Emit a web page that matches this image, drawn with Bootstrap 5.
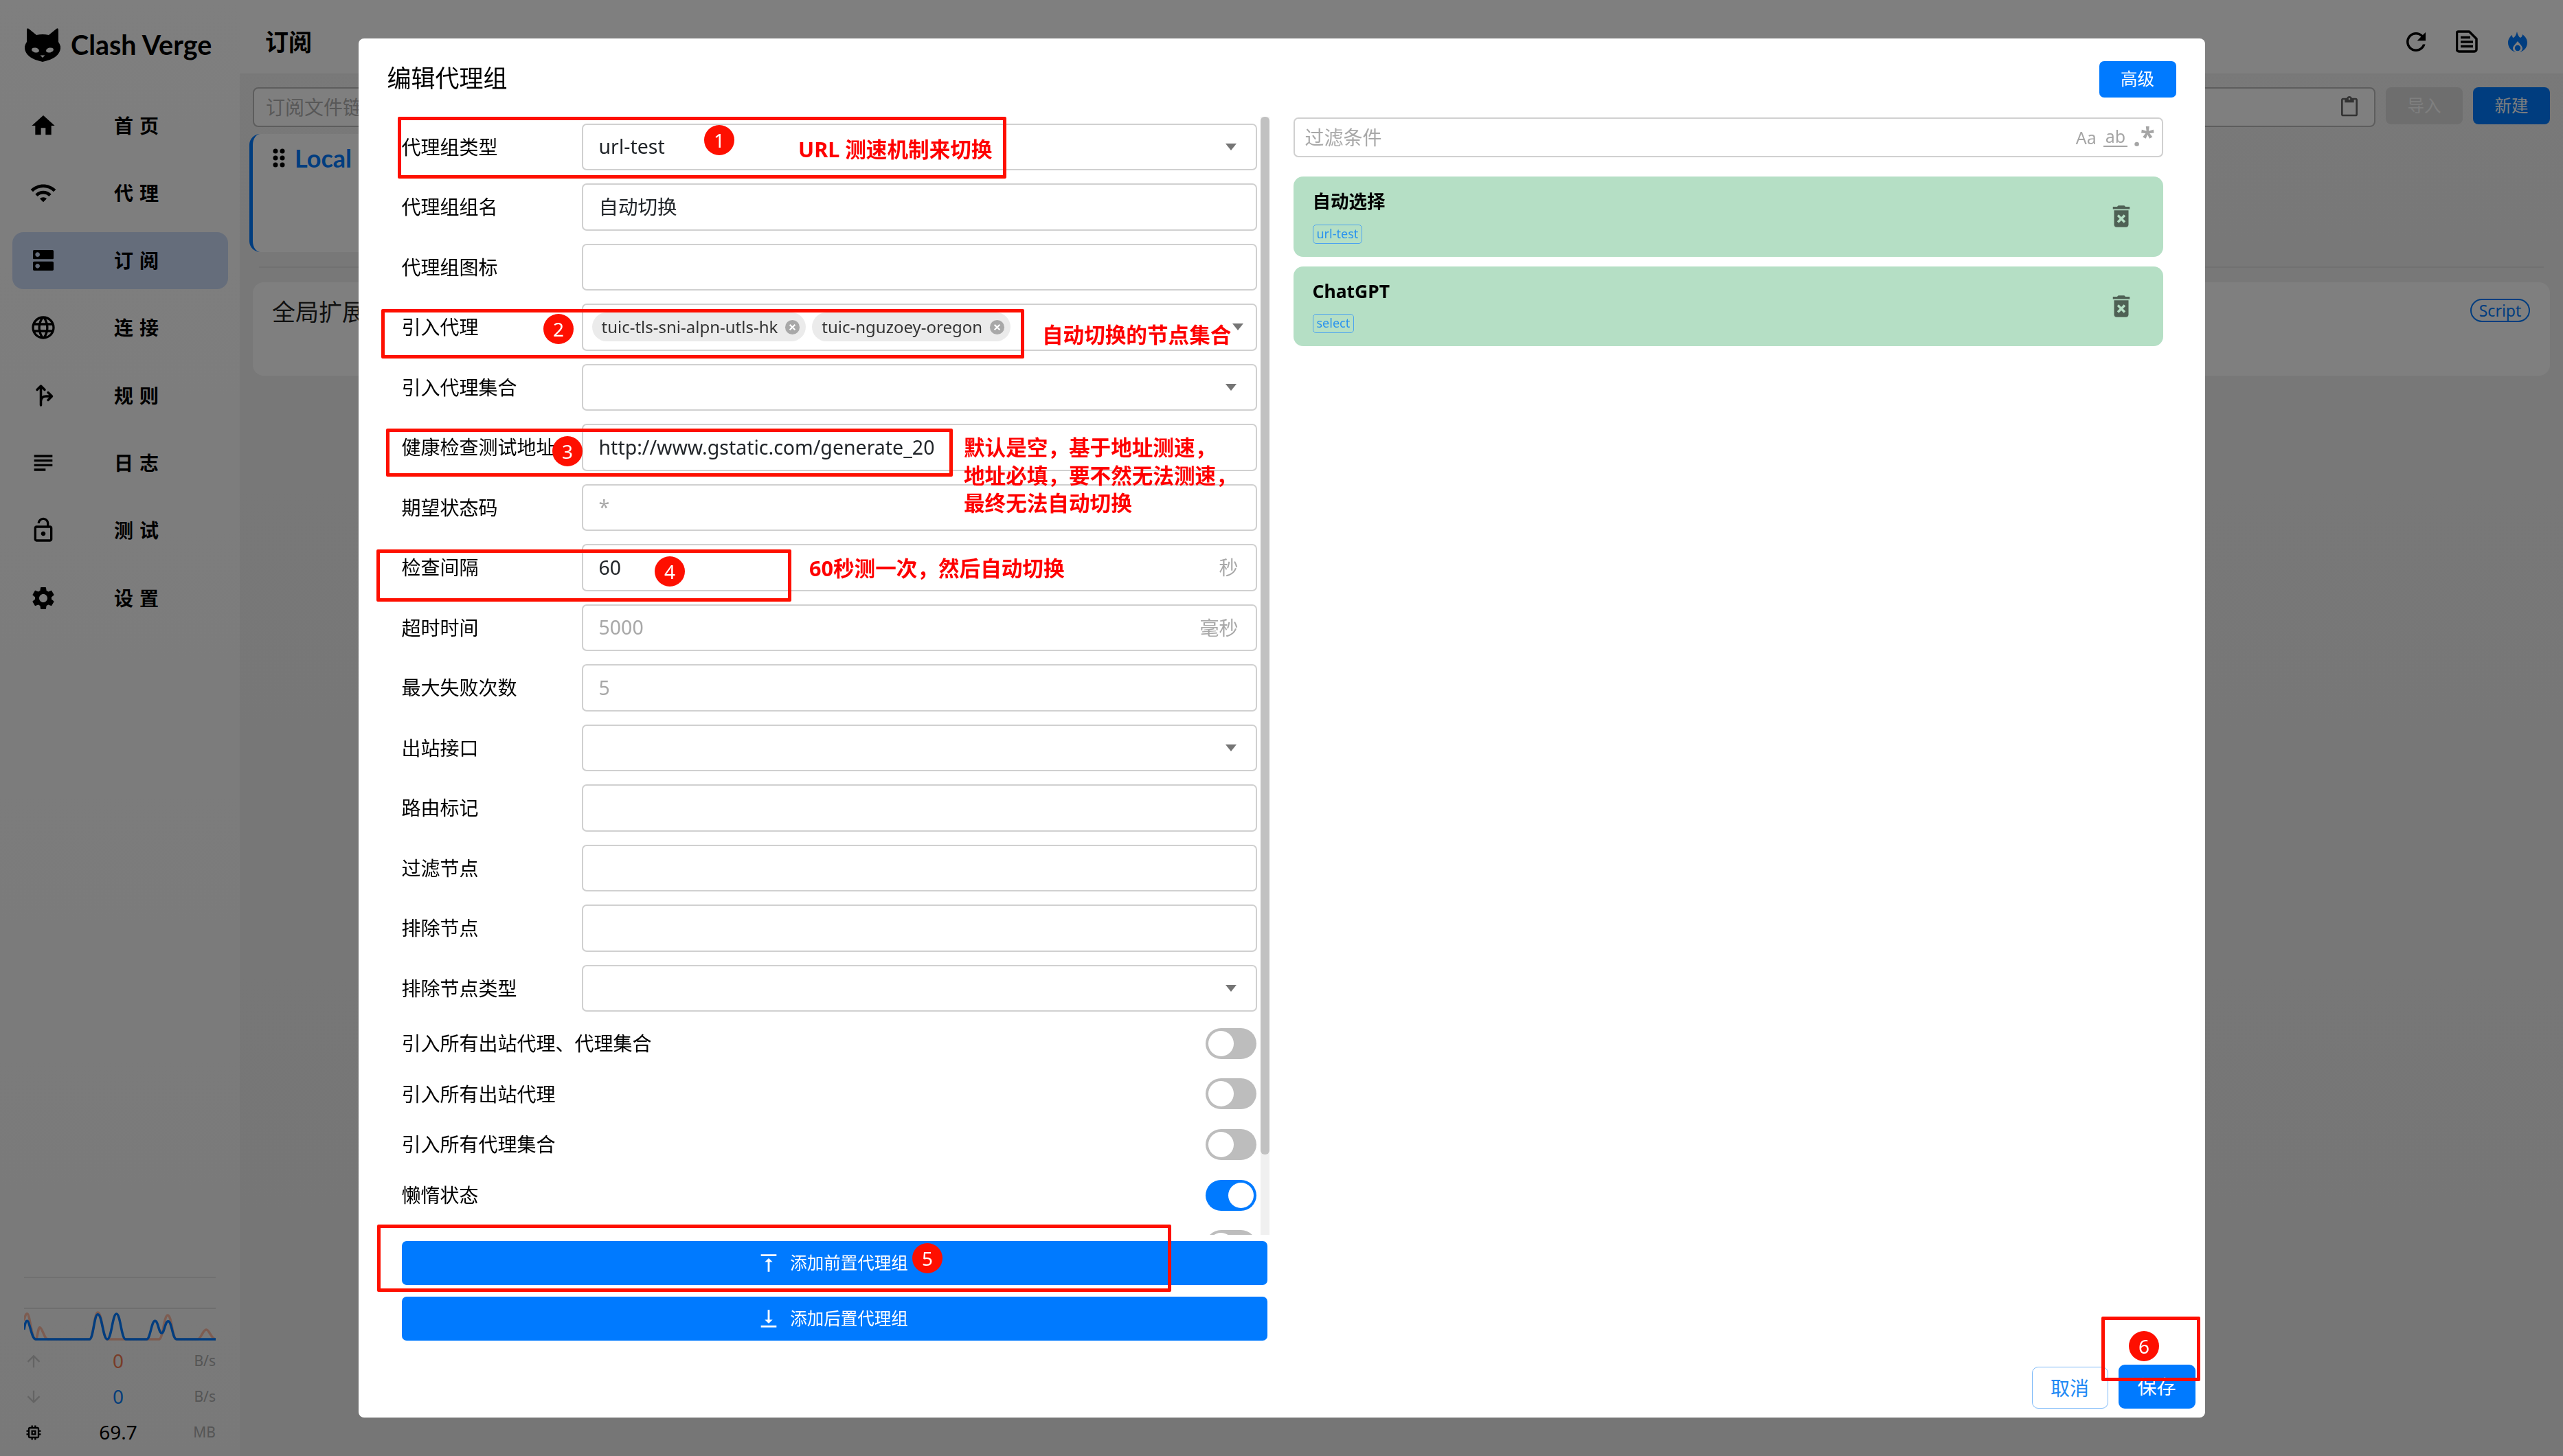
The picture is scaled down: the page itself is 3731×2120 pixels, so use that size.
<!DOCTYPE html>
<html lang="zh-CN">
<head>
<meta charset="utf-8">
<title>Clash Verge</title>
<link rel="stylesheet" href="https://cdn.jsdelivr.net/npm/bootstrap@5.3.0/dist/css/bootstrap.min.css">
<style>
html,body{height:100%;overflow:hidden}
body{font-family:"Noto Sans","Noto Sans CJK SC",sans-serif;font-size:28px;color:#000;background:#f0f0f0}
svg{display:block;flex:none}
.app-shell{height:2120px;width:3731px}
.side-pane{width:349px;background:linear-gradient(#fefefe,#f3f3f3);flex:none}
.logo-area{height:141px;padding:41px 0 0 36px}
.logo-txt{font-family:Lato,sans-serif;font-weight:700;font-size:39.500px;margin-left:15px;line-height:48px}
.nav-rows{padding:0 17px 0 18px;display:flex;flex-direction:column;gap:15.3px}
.nav-row{height:83px;border-radius:16px;padding-left:25px;display:flex;align-items:center;font-weight:700;letter-spacing:9px}
.nav-row svg{width:40px;height:40px;margin-right:83px}
.nav-row.is-on{background:#cadaf6}
.rule-ico path{fill:none;stroke:#000;stroke-width:3.500;stroke-linecap:round;stroke-linejoin:round}
.traffic{margin-top:auto;padding:0 35px 8px}
.tr-line{height:45px;border-top:2px solid #e0e0e0}
.tr-line2{height:0;border-top:2px solid #dcdcdc}
.tr-chart{width:279px;height:50px}
.tr-chart path{fill:none;stroke-width:3.5px;vector-effect:non-scaling-stroke}
.tr-row{height:52px;display:grid;grid-template-columns:28px 218px 33px;align-items:center}
.tr-row svg{width:28px;height:28px}
.tr-val{text-align:center;font-size:28px;line-height:1;margin-top:-3px}
.tr-up{color:#f0784f}
.tr-down{color:#0a7cf5}
.tr-unit{font-size:21px;color:#aaa;text-align:right;white-space:nowrap;justify-self:end}
.main-pane{background:linear-gradient(#f2f2f2,#ececec);min-width:0}
.top-bar{height:109px;background:#fefefe;padding:14px 29px 0 37px;border-bottom:2px solid #f0f0f0}
.page-ttl{font-size:34px;font-weight:700;line-height:1}
.top-ico{width:74px;display:flex;justify-content:center}
.tool-row{margin:18px 19px 0;gap:15px}
.url-box{height:58px;border:2px solid #bbb;border-radius:8px;background:#fff;padding:0 20px 0 17px;color:#b0b0b0}
.tool-btn{width:112px;height:54px;border-radius:8px;border:0;font-size:24.5px;color:#fff;flex:none;padding:0}
.tool-off{background:#dcdcdc;color:#fff}
.tool-new{background:#007aff}
.local-card{width:800px;height:172px;margin:10px 0 0 14px;background:#fff;border-left:5px solid #007aff;border-radius:16px;padding:8px 0 0 29px}
.local-name{font-weight:700;font-size:36px;color:#007aff;font-family:Lato,sans-serif;margin-left:14px}
.sep-line{margin:21px 28px 0 28px;border-top:2px solid #e2e2e2}
.ext-card{height:136px;margin:21px 19px 0;background:#fff;border-radius:16px;padding:20px 29px 0 28px}
.ext-ttl{font-size:34px;line-height:46px;color:#222}
.tag-pill{border:2px solid #007aff;color:#007aff;border-radius:17px;font-size:23px;height:34px;width:87px;display:flex;align-items:center;justify-content:center;margin-top:4px}
.dlg{max-width:2688px;margin:56px auto 0}
.dlg .modal-content{height:2008px;border:0;border-radius:8px}
.dlg-head{height:114px;padding:0 42px;flex:none}
.dlg-ttl{font-size:35px;line-height:1}
.blue-btn{background:#007aff;color:#fff;border:0;border-radius:7px;font-size:24.5px;padding:0}
.adv-btn{width:112px;height:53px;margin-top:4px}
.dlg-body{flex:1;min-height:0;padding:0 61px 0 63px;gap:35px}
.left-col{width:1263px;flex:none}
.form-wrap{height:1628px;position:relative}
.form-scroll{height:100%;overflow:hidden;padding-right:18px}
.sb-track{position:absolute;right:0;top:0;bottom:0;width:13px;background:#f0f0f0}
.sb-thumb{position:absolute;right:0;top:0;width:13px;height:1511px;background:#c1c1c1;border-radius:6px}
.frow{height:87.5px;display:flex;align-items:center}
.flabel{width:262px;flex:none;line-height:1;white-space:nowrap}
.fbox{flex:1;height:68.5px;border:2px solid #d0d0d0;border-radius:7px;padding:0 23px;display:flex;align-items:center;font-size:28.500px;position:relative;min-width:0}
.fbox.with-chips{padding:0 13px}
.ph{color:#a8a8a8}
.unit{margin-left:auto;color:#a8a8a8;padding-right:2px;font-size:28px}
.caret-tri{width:0;height:0;border:8px solid transparent;border-top:10px solid #757575;border-bottom:0;margin-left:auto;margin-right:5px}
.chip-pill{height:42px;border-radius:21px;background:#ebebeb;padding:0 8px 0 14px;display:flex;align-items:center;font-size:24px;color:#333;margin-right:9px;white-space:nowrap}
.chip-x{width:23px;height:23px;margin-left:10px}
.trow{height:73.6px;display:flex;align-items:center;justify-content:space-between;padding-right:1px}
.tgl{width:74px;height:45px;border-radius:23px;background:#bdbdbd;padding:4px;display:flex}
.tgl::after{content:"";width:37px;height:37px;border-radius:50%;background:#fff}
.tgl.is-on{background:#007aff;justify-content:flex-end}
.wide-btn{height:64px;width:1260px;display:flex;align-items:center;justify-content:center;font-size:24.5px;margin-top:17px;padding-right:5px}
.wide-btn svg{width:34px;height:34px;margin-right:14px}
.wide-first{margin-top:9px}
.right-col{flex:1;min-width:0;padding-top:1px}
.filter-box{height:58px;border:2px solid #d0d0d0;border-radius:7px;padding:0 10px 0 15px;font-size:28px;color:#a8a8a8}
.filt-sym{font-size:25px;color:#a5a5a5;margin-left:10px;line-height:1}
.ab-sym{border-bottom:2px solid #a5a5a5;padding:0 3px 1px}
.star-sym{font-size:38px;font-weight:700;margin-left:8px;margin-bottom:4px}
.grp-card{height:116.5px;background:#b5dfc5;border-radius:14px;padding:0 14px 0 28px;margin-top:14px}
.grp-first{margin-top:28px}
.grp-ttl{font-size:26.500px;font-weight:700;line-height:1;margin-top:6px}
.grp-tag{border:1.5px solid #4ba3f0;color:#2b93ee;border-radius:5px;font-size:18px;line-height:25px;height:28px;padding:0 5px;display:inline-block;margin-top:20px}
.grp-del{width:42px;height:42px;margin-right:26px;fill:#4f6155}
.dlg-foot{height:76px;padding:0 14px 13px 0;gap:15px;flex:none}
.ghost-btn{width:111px;height:61px;background:#fff;border:1.5px solid #7db9f8;border-radius:9px;color:#2089f5;font-size:28px;padding:0}
.save-btn{width:112px;height:64px;border-radius:9px;font-size:28px}
.ann-layer{position:fixed;inset:0;z-index:1060;pointer-events:none}
.red-box{position:absolute;border:5px solid #fe0f00;border-radius:2px}
.rb1{left:579px;top:170px;width:886px;height:90px}
.rb2{left:555px;top:450px;width:936px;height:72px}
.rb3{left:562px;top:624px;width:825px;height:70px}
.rb4{left:548px;top:800px;width:604px;height:76px}
.rb5{left:549px;top:1783px;width:1156px;height:98px}
.rb6{left:3059px;top:1917px;width:144px;height:94px}
.red-dot{position:absolute;width:44px;height:44px;border-radius:50%;background:#fe0f00;color:#fff;font-size:28px;line-height:44px;text-align:center}
.rd1{left:1025px;top:182px}
.rd2{left:791px;top:457px}
.rd3{left:804px;top:635px}
.rd4{left:953px;top:810px}
.rd5{left:1328px;top:1810px}
.rd6{left:3099px;top:1938px}
.red-txt{position:absolute;color:#fe0000;font-weight:700;font-size:30.600px;line-height:40px;white-space:nowrap}
.rt1{left:1162px;top:197px}
.rt2{left:1517px;top:467px}
.rt3{left:1403px;top:631px;line-height:40.5px}
.rt4{left:1178px;top:807px}
</style>
</head>
<body>
<div class="app-shell d-flex">
  <aside class="side-pane d-flex flex-column">
    <div class="logo-area d-flex align-items-start">
      <svg width="52" height="50" viewBox="0 0 52 50"><path d="M6 1L17 10Q26 8 35 10L46 1Q49-1 49 3L49 20Q53 26 52 30Q50 44 26 49Q2 44 0 30Q-1 26 3 20L3 3Q3-1 6 1Z"/><ellipse cx="15.500" cy="32" rx="5.500" ry="3.500" fill="#fff" transform="rotate(12 15.500 32)"/><ellipse cx="36.500" cy="32" rx="5.500" ry="3.500" fill="#fff" transform="rotate(-12 36.500 32)"/><path d="M22.500 39.500h7L26 43z" fill="#fff"/></svg>
      <span class="logo-txt">Clash Verge</span>
    </div>
    <nav class="nav-rows">
      <div class="nav-row"><svg viewBox="0 0 24 24"><path d="M10 20v-6h4v6h5v-8h3L12 3 2 12h3v8z"/></svg>首页</div>
      <div class="nav-row"><svg viewBox="0 0 24 24"><path d="M1 9l2 2c4.970-4.970 13.030-4.970 18 0l2-2C16.930 2.930 7.080 2.930 1 9zm8 8l3 3 3-3c-1.650-1.660-4.340-1.660-6 0zm-4-4l2 2c2.760-2.760 7.240-2.760 10 0l2-2C15.140 9.140 8.870 9.140 5 13z"/></svg>代理</div>
      <div class="nav-row is-on"><svg viewBox="0 0 24 24"><path d="M20 13H4c-.55 0-1 .45-1 1v6c0 .55.45 1 1 1h16c.55 0 1-.45 1-1v-6c0-.55-.45-1-1-1zM7 19c-1.100 0-2-.9-2-2s.9-2 2-2 2 .9 2 2-.9 2-2 2zM20 3H4c-.55 0-1 .45-1 1v6c0 .55.45 1 1 1h16c.55 0 1-.45 1-1V4c0-.55-.45-1-1-1zM7 9c-1.100 0-2-.9-2-2s.9-2 2-2 2 .9 2 2-.9 2-2 2z"/></svg>订阅</div>
      <div class="nav-row"><svg viewBox="0 0 24 24"><path d="M11.990 2C6.470 2 2 6.480 2 12s4.470 10 9.990 10C17.520 22 22 17.520 22 12S17.520 2 11.990 2zm6.930 6h-2.950c-.32-1.250-.78-2.450-1.380-3.560 1.840.63 3.370 1.910 4.330 3.560zM12 4.040c.83 1.200 1.480 2.530 1.910 3.960h-3.820c.43-1.430 1.080-2.760 1.910-3.960zM4.260 14C4.100 13.360 4 12.690 4 12s.1-1.360.26-2h3.380c-.08.66-.14 1.320-.14 2 0 .68.06 1.340.14 2H4.260zm.82 2h2.950c.32 1.250.78 2.450 1.380 3.560-1.840-.63-3.370-1.900-4.330-3.560zm2.950-8H5.080c.96-1.660 2.490-2.930 4.330-3.560C8.810 5.550 8.350 6.750 8.030 8zM12 19.960c-.83-1.200-1.480-2.530-1.910-3.960h3.820c-.43 1.430-1.080 2.760-1.910 3.960zM14.340 14H9.660c-.09-.66-.16-1.320-.16-2 0-.68.07-1.350.16-2h4.680c.09.65.16 1.320.16 2 0 .68-.07 1.340-.16 2zm.25 5.560c.6-1.110 1.060-2.310 1.380-3.560h2.950c-.96 1.650-2.490 2.930-4.330 3.560zM16.360 14c.08-.66.14-1.320.14-2 0-.68-.06-1.340-.14-2h3.380c.16.64.26 1.310.26 2s-.1 1.360-.26 2h-3.380z"/></svg>连接</div>
      <div class="nav-row"><svg class="rule-ico" viewBox="3 6 40 40"><path d="M14 17.500L19.500 12L25 17.500M19.500 12V40M19.500 34C20 29 23 27 27 27H35M30 21.500L35.500 27L30 32.500"/></svg>规则</div>
      <div class="nav-row"><svg viewBox="0 0 24 24"><path d="M14 17H4v2h10v-2zm6-8H4v2h16V9zM4 15h16v-2H4v2zM4 5v2h16V5H4z"/></svg>日志</div>
      <div class="nav-row"><svg viewBox="0 0 24 24"><path d="M18 8h-1V6c0-2.760-2.240-5-5-5S7 3.240 7 6h2c0-1.660 1.340-3 3-3s3 1.340 3 3v2H6c-1.100 0-2 .9-2 2v10c0 1.100.9 2 2 2h12c1.100 0 2-.9 2-2V10c0-1.100-.9-2-2-2zm0 12H6V10h12v10zm-6-3c1.100 0 2-.9 2-2s-.9-2-2-2-2 .9-2 2 .9 2 2 2z"/></svg>测试</div>
      <div class="nav-row"><svg viewBox="0 0 24 24"><path d="M19.140 12.940c.04-.3.06-.61.06-.94 0-.32-.02-.64-.07-.94l2.030-1.580c.18-.14.23-.41.12-.61l-1.920-3.320c-.12-.22-.37-.29-.59-.22l-2.390.96c-.5-.38-1.030-.7-1.620-.94l-.36-2.540c-.04-.24-.24-.41-.48-.41h-3.840c-.24 0-.43.17-.47.41l-.36 2.540c-.59.24-1.130.57-1.620.94l-2.390-.96c-.22-.08-.47 0-.59.22L2.740 8.870c-.12.21-.08.47.12.61l2.030 1.580c-.05.3-.09.63-.09.94s.02.64.07.94l-2.030 1.580c-.18.14-.23.41-.12.61l1.920 3.320c.12.22.37.29.59.22l2.390-.96c.5.38 1.030.7 1.620.94l.36 2.540c.05.24.24.41.48.41h3.840c.24 0 .44-.17.47-.41l.36-2.540c.59-.24 1.130-.56 1.620-.94l2.390.96c.22.08.47 0 .59-.22l1.920-3.320c.12-.22.07-.47-.12-.61l-2.010-1.580zM12 15.600c-1.980 0-3.600-1.620-3.600-3.600s1.620-3.600 3.600-3.600 3.600 1.620 3.600 3.600-1.620 3.600-3.600 3.600z"/></svg>设置</div>
    </nav>
    <div class="traffic">
      <div class="tr-line"></div>
      <div class="tr-line2"></div>
      <svg class="tr-chart" viewBox="91 315 730 150" preserveAspectRatio="none">
        <path stroke="#ff8a60" opacity=".55" d="M91 365C95 345 98 335 103 335C113 335 120 447 135 447C142 447 144 395 151 395C160 395 168 447 182 447L340 447C355 447 358 330 372 330C388 330 392 447 408 447L605 447C620 447 624 342 638 342C654 342 656 447 672 447L752 447C765 447 772 405 785 405C797 405 804 447 821 447"/>
        <path stroke="#007aff" d="M91 405C95 378 98 367 103 367C112 367 120 447 135 447L340 447C355 447 358 338 372 338C388 338 392 447 408 447C424 447 428 336 443 336C458 336 462 447 478 447L558 447C572 447 576 367 590 367C602 367 604 420 615 420C626 420 628 368 640 368C654 368 656 447 672 447L821 447"/>
      </svg>
      <div class="tr-row"><svg viewBox="0 0 24 24" fill="#c8c8c8"><path d="M4 12l1.410 1.410L11 7.830V20h2V7.830l5.580 5.590L20 12l-8-8-8 8z"/></svg><span class="tr-val tr-up">0</span><span class="tr-unit">B/s</span></div>
      <div class="tr-row"><svg viewBox="0 0 24 24" fill="#c8c8c8"><path d="M20 12l-1.410-1.410L13 16.170V4h-2v12.170l-5.580-5.590L4 12l8 8 8-8z"/></svg><span class="tr-val tr-down">0</span><span class="tr-unit">B/s</span></div>
      <div class="tr-row"><svg viewBox="0 0 24 24"><path d="M15 9H9v6h6V9zm-2 4h-2v-2h2v2zm8-2V9h-2V7c0-1.100-.9-2-2-2h-2V3h-2v2h-2V3H9v2H7c-1.100 0-2 .9-2 2v2H3v2h2v2H3v2h2v2c0 1.100.9 2 2 2h2v2h2v-2h2v2h2v-2h2c1.100 0 2-.9 2-2v-2h2v-2h-2v-2h2zm-4 6H7V7h10v10z"/></svg><span class="tr-val">69.7</span><span class="tr-unit">MB</span></div>
    </div>
  </aside>
  <main class="main-pane flex-grow-1 d-flex flex-column">
    <header class="top-bar d-flex align-items-center">
      <div class="page-ttl me-auto">订阅</div>
      <div class="top-ico"><svg width="42" height="42" viewBox="0 0 24 24"><path d="M17.650 6.350C16.200 4.900 14.210 4 12 4c-4.420 0-7.990 3.580-7.990 8s3.570 8 7.990 8c3.730 0 6.840-2.550 7.730-6h-2.080c-.82 2.330-3.040 4-5.650 4-3.310 0-6-2.690-6-6s2.690-6 6-6c1.660 0 3.140.69 4.220 1.780L13 11h7V4l-2.350 2.350z"/></svg></div>
      <div class="top-ico"><svg width="32" height="33" viewBox="0 0 32 33" fill="none" stroke="#000" stroke-width="3.500" stroke-linejoin="round"><path d="M3.500 2h16L30 12.500V28a3 3 0 0 1-3 3H4.500a3 3 0 0 1-3-3V4a2 2 0 0 1 2-2z"/><path d="M7 10.500h14M7 17h18M7 23.500h18"/></svg></div>
      <div class="top-ico"><svg width="28" height="30" viewBox="0 0 28 30"><path fill="#007aff" fill-rule="evenodd" d="M13 0C14 5 16 8 18 9C20 8 21 6 21 4C25 7 28 11 28 16C28 24 22 30 14 30C6 30 0 24 0 16C0 11 3 7 6 5C6 8 7 9 8 9C11 7 12 4 13 0ZM14 14C11 18 7 21 7 24.500A7 5.500 0 0 0 21 24.500C21 21 17 18 14 14Z"/><circle cx="14" cy="24" r="4.200" fill="#007aff"/></svg></div>
    </header>
    <div class="tool-row d-flex">
      <div class="url-box flex-grow-1 d-flex align-items-center justify-content-between">订阅文件链接<svg width="32" height="32" viewBox="0 0 24 24" fill="#666"><path d="M19 2h-4.180C14.400.84 13.300 0 12 0c-1.300 0-2.400.84-2.820 2H5c-1.100 0-2 .9-2 2v16c0 1.100.9 2 2 2h14c1.100 0 2-.9 2-2V4c0-1.100-.9-2-2-2zm-7 0c.55 0 1 .45 1 1s-.45 1-1 1-1-.45-1-1 .45-1 1-1zm7 18H5V4h2v3h10V4h2v16z"/></svg></div>
      <button class="tool-btn tool-off mt-0">导入</button>
      <button class="tool-btn tool-new">新建</button>
    </div>
    <div class="local-card d-flex align-items-center align-self-start">
      <div class="d-flex align-items-center align-self-start">
        <svg width="18" height="28" viewBox="0 0 18 28"><circle cx="4" cy="4" r="3.500"/><circle cx="14" cy="4" r="3.500"/><circle cx="4" cy="14" r="3.500"/><circle cx="14" cy="14" r="3.500"/><circle cx="4" cy="24" r="3.500"/><circle cx="14" cy="24" r="3.500"/></svg>
        <span class="local-name">Local</span>
      </div>
    </div>
    <div class="sep-line"></div>
    <div class="ext-card d-flex justify-content-between align-items-start">
      <span class="ext-ttl">全局扩展</span>
      <span class="tag-pill">Script</span>
    </div>
  </main>
</div>

<div class="modal-backdrop show"></div>

<div class="modal d-block">
  <div class="modal-dialog dlg">
    <div class="modal-content">
      <div class="dlg-head d-flex align-items-center justify-content-between">
        <div class="dlg-ttl">编辑代理组</div>
        <button class="blue-btn adv-btn">高级</button>
      </div>
      <div class="dlg-body d-flex">
        <div class="left-col">
          <div class="form-wrap">
          <div class="form-scroll">
            <div class="frow"><div class="flabel">代理组类型</div><div class="fbox form-control">url-test<i class="caret-tri"></i></div></div>
            <div class="frow"><div class="flabel">代理组组名</div><div class="fbox form-control">自动切换</div></div>
            <div class="frow"><div class="flabel">代理组图标</div><div class="fbox form-control"></div></div>
            <div class="frow"><div class="flabel">引入代理</div><div class="fbox form-control with-chips">
              <span class="chip-pill">tuic-tls-sni-alpn-utls-hk<svg class="chip-x" viewBox="0 0 24 24"><circle cx="12" cy="12" r="11" fill="#a8a8a8"/><path d="M8 8l8 8M16 8l-8 8" stroke="#fff" stroke-width="2.200"/></svg></span>
              <span class="chip-pill">tuic-nguzoey-oregon<svg class="chip-x" viewBox="0 0 24 24"><circle cx="12" cy="12" r="11" fill="#a8a8a8"/><path d="M8 8l8 8M16 8l-8 8" stroke="#fff" stroke-width="2.200"/></svg></span>
              <i class="caret-tri"></i></div></div>
            <div class="frow"><div class="flabel">引入代理集合</div><div class="fbox form-control"><i class="caret-tri"></i></div></div>
            <div class="frow"><div class="flabel">健康检查测试地址</div><div class="fbox form-control">http://www.gstatic.com/generate_20</div></div>
            <div class="frow"><div class="flabel">期望状态码</div><div class="fbox form-control"><span class="ph">*</span></div></div>
            <div class="frow"><div class="flabel">检查间隔</div><div class="fbox form-control">60<span class="unit">秒</span></div></div>
            <div class="frow"><div class="flabel">超时时间</div><div class="fbox form-control"><span class="ph">5000</span><span class="unit">毫秒</span></div></div>
            <div class="frow"><div class="flabel">最大失败次数</div><div class="fbox form-control"><span class="ph">5</span></div></div>
            <div class="frow"><div class="flabel">出站接口</div><div class="fbox form-control"><i class="caret-tri"></i></div></div>
            <div class="frow"><div class="flabel">路由标记</div><div class="fbox form-control"></div></div>
            <div class="frow"><div class="flabel">过滤节点</div><div class="fbox form-control"></div></div>
            <div class="frow"><div class="flabel">排除节点</div><div class="fbox form-control"></div></div>
            <div class="frow"><div class="flabel">排除节点类型</div><div class="fbox form-control"><i class="caret-tri"></i></div></div>
            <div class="trow"><span>引入所有出站代理、代理集合</span><span class="tgl"></span></div>
            <div class="trow"><span>引入所有出站代理</span><span class="tgl"></span></div>
            <div class="trow"><span>引入所有代理集合</span><span class="tgl"></span></div>
            <div class="trow"><span>懒惰状态</span><span class="tgl is-on"></span></div>
            <div class="trow justify-content-end"><span class="tgl"></span></div>
          </div>
          <div class="sb-track"><div class="sb-thumb"></div></div>
          </div>
          <button class="blue-btn wide-btn wide-first"><svg viewBox="0 0 24 24" fill="#fff"><path d="M8 11h3v10h2V11h3l-4-4-4 4zM4 3v2h16V3H4z"/></svg>添加前置代理组</button>
          <button class="blue-btn wide-btn"><svg viewBox="0 0 24 24" fill="#fff"><path d="M16 13h-3V3h-2v10H8l4 4 4-4zM4 19v2h16v-2H4z"/></svg>添加后置代理组</button>
        </div>
        <div class="right-col">
          <div class="filter-box d-flex align-items-center">
            <span class="me-auto">过滤条件</span>
            <span class="filt-sym">Aa</span><span class="filt-sym ab-sym">ab</span><span class="filt-sym star-sym">.*</span>
          </div>
          <div class="grp-card grp-first d-flex align-items-center justify-content-between">
            <div><div class="grp-ttl">自动选择</div><span class="grp-tag">url-test</span></div>
            <svg class="grp-del" viewBox="0 0 24 24"><path d="M6 19c0 1.100.9 2 2 2h8c1.100 0 2-.9 2-2V7H6v12zm2.460-7.120 1.410-1.410L12 12.590l2.120-2.120 1.410 1.410L13.410 14l2.120 2.120-1.410 1.410L12 15.410l-2.120 2.120-1.410-1.410L10.590 14l-2.130-2.120zM15.500 4l-1-1h-5l-1 1H5v2h14V4z"/></svg>
          </div>
          <div class="grp-card d-flex align-items-center justify-content-between">
            <div><div class="grp-ttl">ChatGPT</div><span class="grp-tag">select</span></div>
            <svg class="grp-del" viewBox="0 0 24 24"><path d="M6 19c0 1.100.9 2 2 2h8c1.100 0 2-.9 2-2V7H6v12zm2.460-7.120 1.410-1.410L12 12.590l2.120-2.120 1.410 1.410L13.410 14l2.120 2.120-1.410 1.410L12 15.410l-2.120 2.120-1.410-1.410L10.590 14l-2.130-2.120zM15.500 4l-1-1h-5l-1 1H5v2h14V4z"/></svg>
          </div>
        </div>
      </div>
      <div class="dlg-foot d-flex justify-content-end align-items-end">
        <button class="ghost-btn">取消</button>
        <button class="blue-btn save-btn">保存</button>
      </div>
    </div>
  </div>
</div>

<div class="ann-layer">
  <div class="red-box rb1"></div><div class="red-box rb2"></div><div class="red-box rb3"></div>
  <div class="red-box rb4"></div><div class="red-box rb5"></div><div class="red-box rb6"></div>
  <div class="red-dot rd1">1</div><div class="red-dot rd2">2</div><div class="red-dot rd3">3</div>
  <div class="red-dot rd4">4</div><div class="red-dot rd5">5</div><div class="red-dot rd6">6</div>
  <div class="red-txt rt1">URL 测速机制来切换</div>
  <div class="red-txt rt2">自动切换的节点集合</div>
  <div class="red-txt rt3">默认是空，基于地址测速，<br>地址必填，要不然无法测速，<br>最终无法自动切换</div>
  <div class="red-txt rt4">60秒测一次，然后自动切换</div>
</div>
<script src="https://cdn.jsdelivr.net/npm/bootstrap@5.3.0/dist/js/bootstrap.bundle.min.js"></script>
</body>
</html>
